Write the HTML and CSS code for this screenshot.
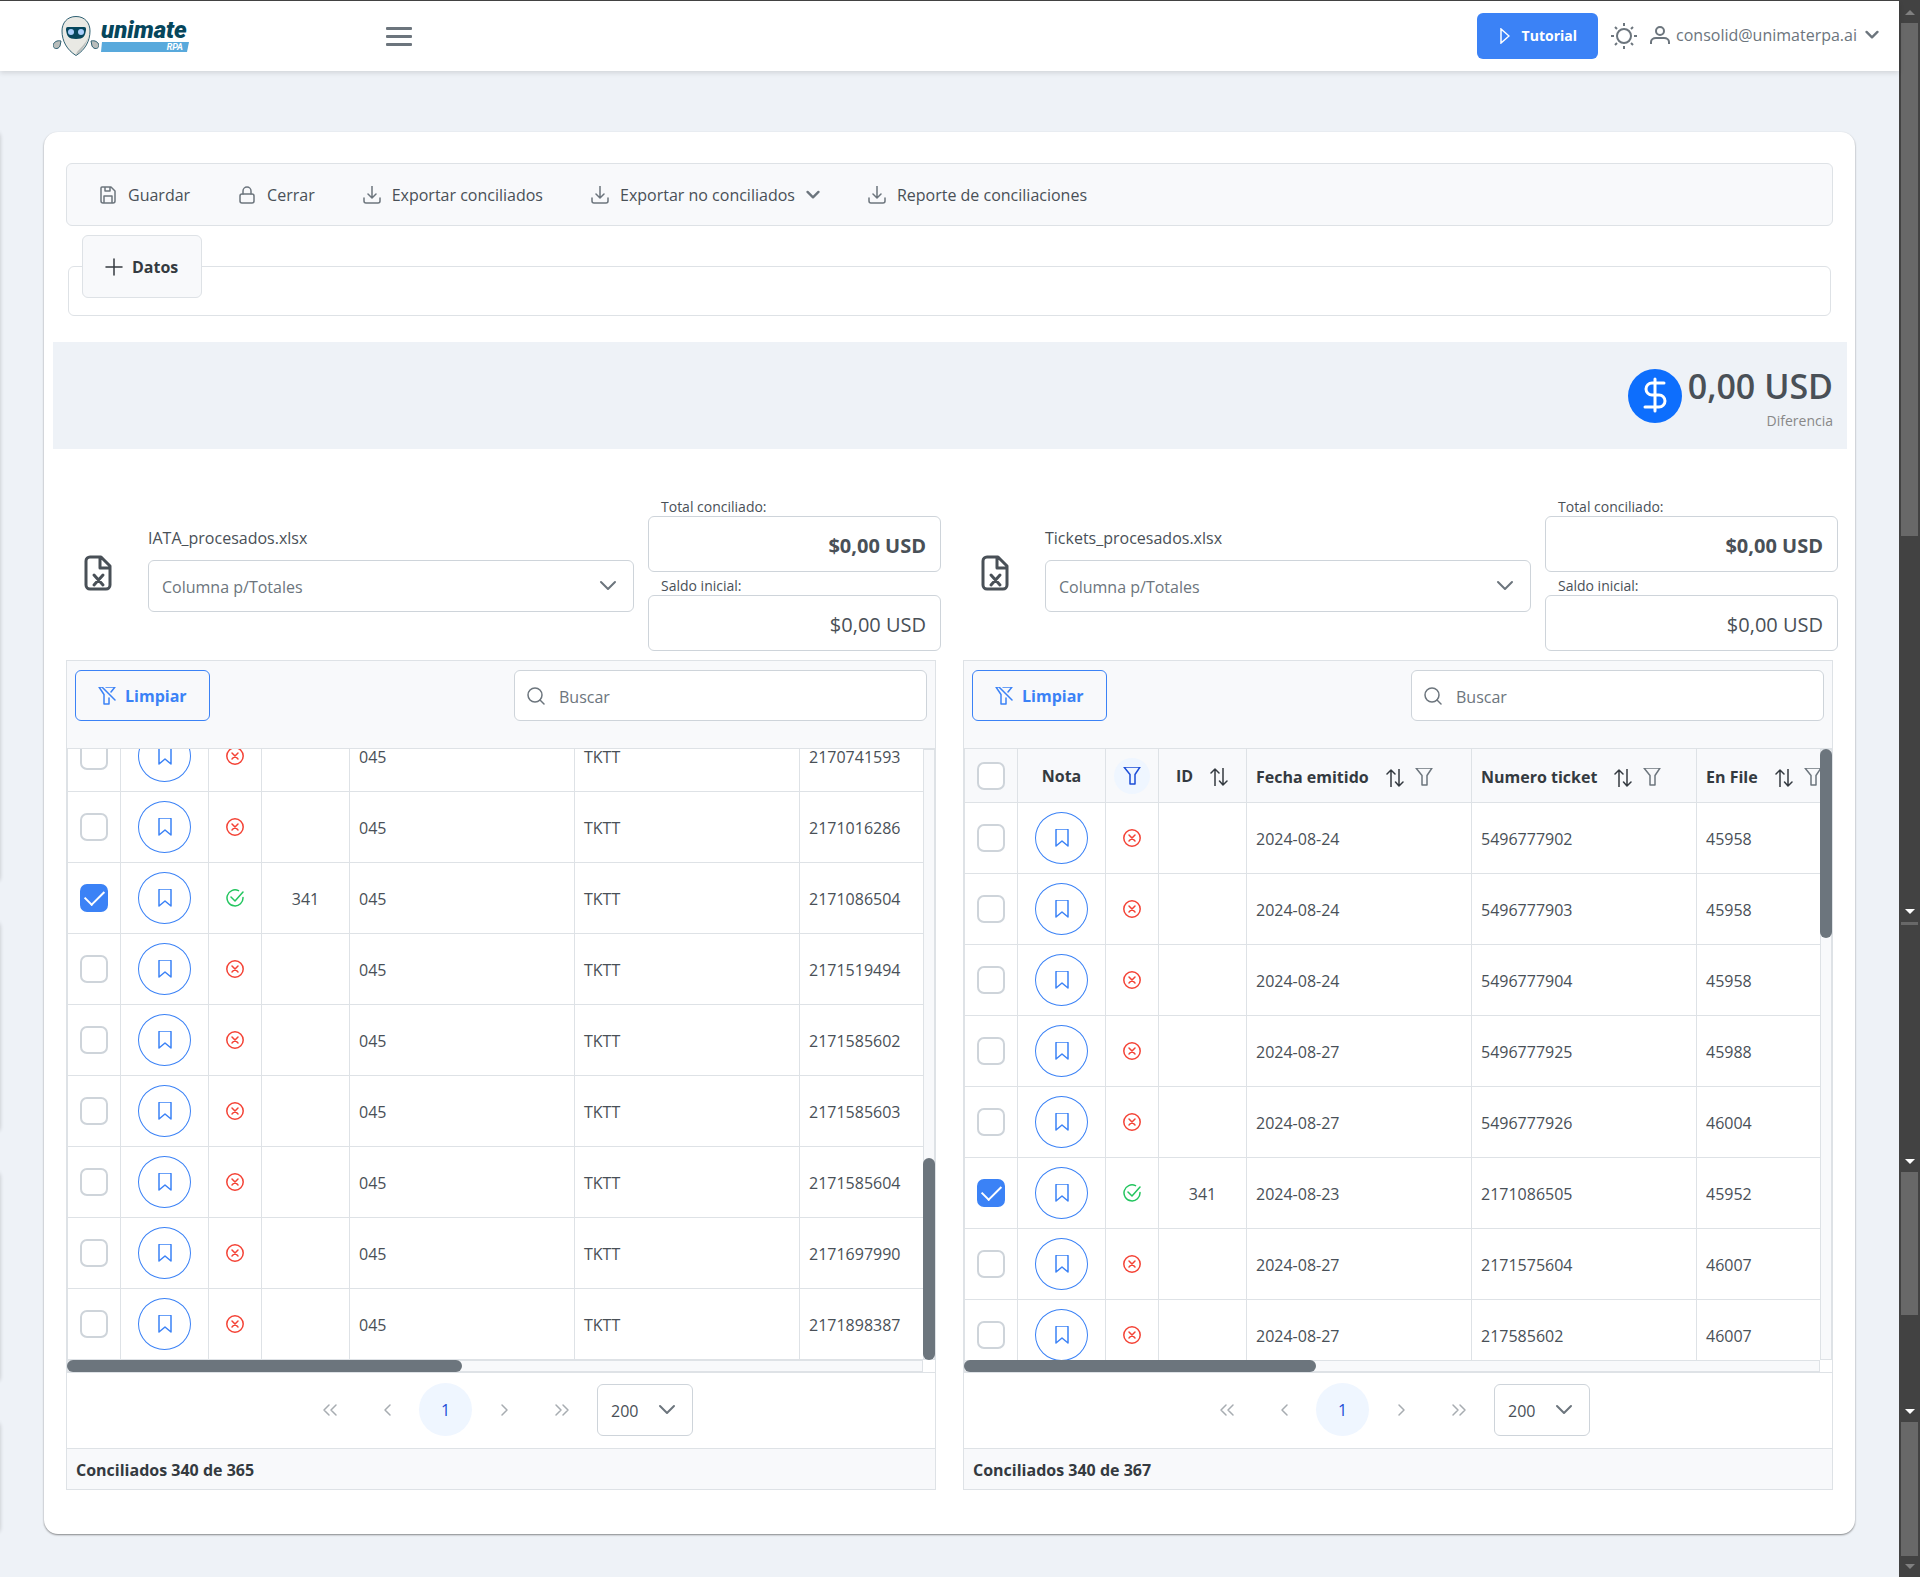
FILE: index.html
```html
<!DOCTYPE html>
<html lang="es">
<head>
<meta charset="utf-8">
<meta name="viewport" content="width=device-width, initial-scale=1">
<title>Unimate RPA - Conciliaciones</title>
<link rel="stylesheet" href="styles.css">
</head>
<body>

<svg class="sprite" aria-hidden="true">
	<symbol id="save" viewBox="0 0 18 18"><path d="M3 1h9l4 4v10a2 2 0 0 1-2 2H4a2 2 0 0 1-2-2V2a1 1 0 0 1 1-1zM5 17v-7h8v7M6 1v4h5V1"/></symbol>
	<symbol id="lock" viewBox="0 0 18 18"><rect x="2" y="8" width="14" height="9" rx="2"/><path d="M5 8V5a4 4 0 0 1 8 0v3"/></symbol>
	<symbol id="download" viewBox="0 0 18 18"><path d="M9 0v11M5 8l4 4 4-4M1 12v3a2 2 0 0 0 2 2h12a2 2 0 0 0 2-2v-3"/></symbol>
	<symbol id="plus" viewBox="0 0 18 18"><path d="M9 1v16M1 9h16"/></symbol>
	<symbol id="down" viewBox="0 0 18 18"><path d="M2 5l7 7 7-7"/></symbol>
	<symbol id="search" viewBox="0 0 18 18"><circle cx="8" cy="8" r="7"/><path d="M13 13l4 4"/></symbol>
	<symbol id="filter" viewBox="0 0 18 18"><path d="M1 0h16l-5 7.500V17H7V7.500z"/></symbol>
	<symbol id="filter-slash" viewBox="0 0 18 18"><path d="M1 0l5 7.500V17h5v-6M1 0h3l13 13M8 0h9l-4 5"/></symbol>
	<symbol id="sort" viewBox="0 0 18 18"><path d="M5 18V1M1 5l4-4 4 4M13 0v17M9.500 13l3.500 4 4-4"/></symbol>
	<symbol id="bookmark" viewBox="0 0 18 18"><path d="M4 0h10a1 1 0 0 1 1 1v16l-6-5-6 5V1a1 1 0 0 1 1-1z"/></symbol>
	<symbol id="no" viewBox="0 0 18 18"><circle cx="9" cy="9" r="8.200"/><path d="M6 6l6 6M12 6l-6 6"/></symbol>
	<symbol id="yes" viewBox="0 0 18 18"><path d="M17 8.500A8 8 0 1 1 12.500 1.700M5 8l4 4 8-9"/></symbol>
	<symbol id="first" viewBox="0 0 18 18"><path d="M8 4L3 9l5 5M15 4l-5 5 5 5"/></symbol>
	<symbol id="prev" viewBox="0 0 18 18"><path d="M11 4L6 9l5 5"/></symbol>
	<symbol id="next" viewBox="0 0 18 18"><path d="M7 4l5 5-5 5"/></symbol>
	<symbol id="last" viewBox="0 0 18 18"><path d="M3 4l5 5-5 5M10 4l5 5-5 5"/></symbol>
	<symbol id="excel" viewBox="0 0 28 36"><path d="M6 2h11l9 9v19a4 4 0 0 1-4 4H6a4 4 0 0 1-4-4V6a4 4 0 0 1 4-4zM16 2v11h10M10 20l9 10M19 20l-9 10"/></symbol>
</svg>

<div class="page">
	<header class="topbar">
		<a class="logo" href="#">
			<svg class="robot" viewBox="0 0 46 40" aria-hidden="true">
				<path d="M8 25c-4-1-7 1-8 4 0 4 5 5 7 1z" fill="#b9bdbb" stroke="#2f6072"/>
				<path d="M38 25c4-1 7 1 8 4 0 4-5 5-7 1z" fill="#b9bdbb" stroke="#2f6072"/>
				<path d="M23 .500C14 .500 9 7 9 15c0 10 5 19 14 24.500C32 34 37 25 37 15 37 7 32 .500 23 .500z" fill="#e9e9e4" stroke="#2f6072"/>
				<path d="M36 19c-2 8-6 15-13 20 0-5 10-9 13-20z" fill="#b9bdbb"/>
				<path d="M15 11h16c2 0 2 1 2 3-1 6-2 9-10 9s-9-3-10-9c0-2 0-3 2-3z" fill="#06465c"/>
				<circle cx="18" cy="16" r="3" fill="#a9cdfa"/><circle cx="28" cy="16" r="3" fill="#a9cdfa"/>
			</svg>
			<span class="brand">
				<span class="brand-name">unimate</span>
				<span class="brand-tag">RPA</span>
			</span>
		</a>
		<button class="menu" aria-label="Menú"><span></span><span></span><span></span></button>
		<div class="account">
			<button class="tutorial"><svg class="play" viewBox="0 0 10 16" aria-hidden="true"><path d="M1 1v14l8-7z"/></svg>Tutorial</button>
			<button class="plain" aria-label="Tema"><svg class="sun" viewBox="0 0 26 26" aria-hidden="true"><circle cx="13" cy="13" r="7"/><path d="M13 0v3M13 23v3M0 13h3M23 13h3M4 4l2 2M20 20l2 2M22 4l-2 2M6 20l-2 2"/></svg></button>
			<button class="plain user"><svg class="person" viewBox="0 0 20 18" aria-hidden="true"><circle cx="10" cy="5" r="4"/><path d="M1 18v-2c0-2 2-4 5-4h8c3 0 5 2 5 4v2"/></svg>consolid@unimaterpa.ai<svg class="icon tiny bold" aria-hidden="true"><use href="#down"/></svg></button>
		</div>
	</header>

	<div class="edge"><span></span><span></span><span></span><span></span></div>

	<main class="card">
		<nav class="toolbar">
			<button><svg class="icon"><use href="#save"/></svg>Guardar</button>
			<button><svg class="icon"><use href="#lock"/></svg>Cerrar</button>
			<button><svg class="icon"><use href="#download"/></svg>Exportar conciliados</button>
			<button><svg class="icon"><use href="#download"/></svg>Exportar no conciliados<svg class="icon tiny bold"><use href="#down"/></svg></button>
			<button><svg class="icon"><use href="#download"/></svg>Reporte de conciliaciones</button>
		</nav>

		<fieldset class="datos">
			<legend><button><svg class="icon"><use href="#plus"/></svg>Datos</button></legend>
		</fieldset>

		<section class="diferencia">
			<svg class="dollar" viewBox="0 0 54 54" aria-hidden="true"><circle cx="27" cy="27" r="27"/><path d="M27 10v32M36 14H24a6 6 0 0 0 0 12h7a6 6 0 0 1 0 12H17"/></svg>
			<div>
				<strong>0,00 USD</strong>
				<small>Diferencia</small>
			</div>
		</section>

		<div class="sides">
			<section class="side">
				<div class="fields">
					<svg class="excel" aria-hidden="true"><use href="#excel"/></svg>
					<div class="source">
						<label for="col1">IATA_procesados.xlsx</label>
						<div class="dropdown">
							<select id="col1"><option>Columna p/Totales</option></select>
							<svg class="icon"><use href="#down"/></svg>
						</div>
					</div>
					<div class="totals">
						<label for="total1">Total conciliado:</label>
						<input id="total1" class="strong" type="text" value="$0,00 USD">
						<label for="saldo1">Saldo inicial:</label>
						<input id="saldo1" type="text" value="$0,00 USD">
					</div>
				</div>

				<div class="panel">
					<div class="panel-head">
						<button class="clear"><svg class="icon"><use href="#filter-slash"/></svg>Limpiar</button>
						<div class="search"><svg class="icon"><use href="#search"/></svg><input type="search" placeholder="Buscar" aria-label="Buscar"></div>
					</div>
					<div class="scroller">
						<div class="view at-end">
							<table>
								<colgroup><col class="c-check"><col class="c-note"><col class="c-state"><col class="c-id"><col class="c-data"><col class="c-data"><col class="c-data"></colgroup>
								<tbody>
								<tr><td><input type="checkbox" aria-label="Fila"></td><td><button class="note" aria-label="Nota"><svg class="icon"><use href="#bookmark"/></svg></button></td><td><svg class="icon no"><use href="#no"/></svg></td><td></td><td>045</td><td>TKTT</td><td>2170741593</td></tr>
								<tr><td><input type="checkbox" aria-label="Fila"></td><td><button class="note" aria-label="Nota"><svg class="icon"><use href="#bookmark"/></svg></button></td><td><svg class="icon no"><use href="#no"/></svg></td><td></td><td>045</td><td>TKTT</td><td>2171016286</td></tr>
								<tr><td><input type="checkbox" aria-label="Fila" checked></td><td><button class="note" aria-label="Nota"><svg class="icon"><use href="#bookmark"/></svg></button></td><td><svg class="icon yes"><use href="#yes"/></svg></td><td>341</td><td>045</td><td>TKTT</td><td>2171086504</td></tr>
								<tr><td><input type="checkbox" aria-label="Fila"></td><td><button class="note" aria-label="Nota"><svg class="icon"><use href="#bookmark"/></svg></button></td><td><svg class="icon no"><use href="#no"/></svg></td><td></td><td>045</td><td>TKTT</td><td>2171519494</td></tr>
								<tr><td><input type="checkbox" aria-label="Fila"></td><td><button class="note" aria-label="Nota"><svg class="icon"><use href="#bookmark"/></svg></button></td><td><svg class="icon no"><use href="#no"/></svg></td><td></td><td>045</td><td>TKTT</td><td>2171585602</td></tr>
								<tr><td><input type="checkbox" aria-label="Fila"></td><td><button class="note" aria-label="Nota"><svg class="icon"><use href="#bookmark"/></svg></button></td><td><svg class="icon no"><use href="#no"/></svg></td><td></td><td>045</td><td>TKTT</td><td>2171585603</td></tr>
								<tr><td><input type="checkbox" aria-label="Fila"></td><td><button class="note" aria-label="Nota"><svg class="icon"><use href="#bookmark"/></svg></button></td><td><svg class="icon no"><use href="#no"/></svg></td><td></td><td>045</td><td>TKTT</td><td>2171585604</td></tr>
								<tr><td><input type="checkbox" aria-label="Fila"></td><td><button class="note" aria-label="Nota"><svg class="icon"><use href="#bookmark"/></svg></button></td><td><svg class="icon no"><use href="#no"/></svg></td><td></td><td>045</td><td>TKTT</td><td>2171697990</td></tr>
								<tr><td><input type="checkbox" aria-label="Fila"></td><td><button class="note" aria-label="Nota"><svg class="icon"><use href="#bookmark"/></svg></button></td><td><svg class="icon no"><use href="#no"/></svg></td><td></td><td>045</td><td>TKTT</td><td>2171898387</td></tr>
								</tbody>
							</table>
						</div>
						<div class="bar-v at-end"><span class="thumb-long"></span></div>
						<div class="bar-h"><span class="thumb-wide"></span></div>
					</div>
					<div class="paginator">
						<button aria-label="Primera"><svg class="icon"><use href="#first"/></svg></button>
						<button aria-label="Anterior"><svg class="icon"><use href="#prev"/></svg></button>
						<button class="current">1</button>
						<button aria-label="Siguiente"><svg class="icon"><use href="#next"/></svg></button>
						<button aria-label="Última"><svg class="icon"><use href="#last"/></svg></button>
						<div class="dropdown rows">
							<select aria-label="Filas por página"><option>200</option></select>
							<svg class="icon"><use href="#down"/></svg>
						</div>
					</div>
					<div class="panel-foot">Conciliados 340 de 365</div>
				</div>
			</section>

			<section class="side">
				<div class="fields">
					<svg class="excel" aria-hidden="true"><use href="#excel"/></svg>
					<div class="source">
						<label for="col2">Tickets_procesados.xlsx</label>
						<div class="dropdown">
							<select id="col2"><option>Columna p/Totales</option></select>
							<svg class="icon"><use href="#down"/></svg>
						</div>
					</div>
					<div class="totals">
						<label for="total2">Total conciliado:</label>
						<input id="total2" class="strong" type="text" value="$0,00 USD">
						<label for="saldo2">Saldo inicial:</label>
						<input id="saldo2" type="text" value="$0,00 USD">
					</div>
				</div>

				<div class="panel">
					<div class="panel-head">
						<button class="clear"><svg class="icon"><use href="#filter-slash"/></svg>Limpiar</button>
						<div class="search"><svg class="icon"><use href="#search"/></svg><input type="search" placeholder="Buscar" aria-label="Buscar"></div>
					</div>
					<div class="scroller">
						<div class="view">
							<table>
								<colgroup><col class="c-check"><col class="c-note"><col class="c-state"><col class="c-id"><col class="c-data"><col class="c-data"><col class="c-data"></colgroup>
								<thead>
								<tr>
									<th><input type="checkbox" aria-label="Todas"></th>
									<th>Nota</th>
									<th><button class="filter-on" aria-label="Filtrar"><svg class="icon"><use href="#filter"/></svg></button></th>
									<th><div class="th">ID<svg class="icon sort"><use href="#sort"/></svg></div></th>
									<th><div class="th">Fecha emitido<svg class="icon sort"><use href="#sort"/></svg><svg class="icon filter"><use href="#filter"/></svg></div></th>
									<th><div class="th">Numero ticket<svg class="icon sort"><use href="#sort"/></svg><svg class="icon filter"><use href="#filter"/></svg></div></th>
									<th><div class="th">En File<svg class="icon sort"><use href="#sort"/></svg><svg class="icon filter"><use href="#filter"/></svg></div></th>
								</tr>
								</thead>
								<tbody>
								<tr><td><input type="checkbox" aria-label="Fila"></td><td><button class="note" aria-label="Nota"><svg class="icon"><use href="#bookmark"/></svg></button></td><td><svg class="icon no"><use href="#no"/></svg></td><td></td><td>2024-08-24</td><td>5496777902</td><td>45958</td></tr>
								<tr><td><input type="checkbox" aria-label="Fila"></td><td><button class="note" aria-label="Nota"><svg class="icon"><use href="#bookmark"/></svg></button></td><td><svg class="icon no"><use href="#no"/></svg></td><td></td><td>2024-08-24</td><td>5496777903</td><td>45958</td></tr>
								<tr><td><input type="checkbox" aria-label="Fila"></td><td><button class="note" aria-label="Nota"><svg class="icon"><use href="#bookmark"/></svg></button></td><td><svg class="icon no"><use href="#no"/></svg></td><td></td><td>2024-08-24</td><td>5496777904</td><td>45958</td></tr>
								<tr><td><input type="checkbox" aria-label="Fila"></td><td><button class="note" aria-label="Nota"><svg class="icon"><use href="#bookmark"/></svg></button></td><td><svg class="icon no"><use href="#no"/></svg></td><td></td><td>2024-08-27</td><td>5496777925</td><td>45988</td></tr>
								<tr><td><input type="checkbox" aria-label="Fila"></td><td><button class="note" aria-label="Nota"><svg class="icon"><use href="#bookmark"/></svg></button></td><td><svg class="icon no"><use href="#no"/></svg></td><td></td><td>2024-08-27</td><td>5496777926</td><td>46004</td></tr>
								<tr><td><input type="checkbox" aria-label="Fila" checked></td><td><button class="note" aria-label="Nota"><svg class="icon"><use href="#bookmark"/></svg></button></td><td><svg class="icon yes"><use href="#yes"/></svg></td><td>341</td><td>2024-08-23</td><td>2171086505</td><td>45952</td></tr>
								<tr><td><input type="checkbox" aria-label="Fila"></td><td><button class="note" aria-label="Nota"><svg class="icon"><use href="#bookmark"/></svg></button></td><td><svg class="icon no"><use href="#no"/></svg></td><td></td><td>2024-08-27</td><td>2171575604</td><td>46007</td></tr>
								<tr><td><input type="checkbox" aria-label="Fila"></td><td><button class="note" aria-label="Nota"><svg class="icon"><use href="#bookmark"/></svg></button></td><td><svg class="icon no"><use href="#no"/></svg></td><td></td><td>2024-08-27</td><td>217585602</td><td>46007</td></tr>
								</tbody>
							</table>
						</div>
						<div class="bar-v"><span></span></div>
						<div class="bar-h"><span></span></div>
					</div>
					<div class="paginator">
						<button aria-label="Primera"><svg class="icon"><use href="#first"/></svg></button>
						<button aria-label="Anterior"><svg class="icon"><use href="#prev"/></svg></button>
						<button class="current">1</button>
						<button aria-label="Siguiente"><svg class="icon"><use href="#next"/></svg></button>
						<button aria-label="Última"><svg class="icon"><use href="#last"/></svg></button>
						<div class="dropdown rows">
							<select aria-label="Filas por página"><option>200</option></select>
							<svg class="icon"><use href="#down"/></svg>
						</div>
					</div>
					<div class="panel-foot">Conciliados 340 de 367</div>
				</div>
			</section>
		</div>
	</main>
</div>

<div class="rail" aria-hidden="true">
	<i class="arrow up"></i>
	<b class="grip g1"></b>
	<i class="arrow lit"></i>
	<b class="grip g2"></b>
	<i class="arrow lit"></i>
	<b class="grip g3"></b>
	<i class="arrow lit"></i>
	<b class="grip g4"></b>
	<i class="arrow"></i>
</div>

</body>
</html>
```
FILE: styles.css
```css
* {
	box-sizing: border-box;
}

body {
	margin: 0;
	min-height: 100vh;
	display: flex;
	border-top: 1px solid #424242;
	background: #eef2f7;
	color: #495057;
	font-family: "Open Sans", "Noto Sans", sans-serif;
	font-size: 16px;
	line-height: 24px;
}

button, input, select {
	font: inherit;
	color: inherit;
}

button {
	display: inline-flex;
	align-items: center;
	padding: 0;
	border: 0;
	background: none;
	white-space: nowrap;
}

svg {
	display: block;
	flex: none;
	fill: none;
	stroke: currentColor;
}

.sprite {
	position: absolute;
	width: 0;
	height: 0;
}

.icon {
	width: 18px;
	height: 18px;
	stroke-width: 1.5px;
	stroke-linecap: round;
	stroke-linejoin: round;
	overflow: visible;
}

.icon.tiny {
	width: 14px;
	height: 14px;
}

.icon.bold {
	stroke-width: 3px;
}

.page {
	flex: 1;
	min-width: 0;
	position: relative;
}

/* top bar */

.topbar {
	display: flex;
	align-items: center;
	height: 70px;
	padding: 0 20px 0 53px;
	background: #fff;
	box-shadow: 0 2px 5px rgba(0, 0, 0, .12);
}

.logo {
	display: flex;
	gap: 2px;
	width: 333px;
	text-decoration: none;
}

.robot {
	width: 46px;
	height: 40px;
	stroke: none;
}

.brand {
	width: 88px;
	padding-top: 2px;
	font-family: Roboto, sans-serif;
	font-style: italic;
	font-weight: 700;
}

.brand-name {
	display: block;
	color: #06465c;
	font-size: 24px;
	font-weight: 900;
	line-height: 24px;
}

.brand-tag {
	display: block;
	padding-right: 6px;
	background: #58a9dc;
	color: #fff;
	font-size: 9px;
	line-height: 10px;
	text-align: right;
	clip-path: polygon(1px 0, 100% 0, 86px 100%, 0 100%);
}

.menu {
	flex-direction: column;
	gap: 5px;
}

.menu span {
	width: 26px;
	height: 3px;
	border-radius: 1px;
	background: #6c757d;
}

.account {
	display: flex;
	align-items: center;
	gap: 13px;
	margin-left: auto;
	color: #6c757d;
}

.tutorial {
	gap: 12px;
	height: 46px;
	padding: 0 21px 0 23px;
	border-radius: 6px;
	background: #3b82f6;
	color: #fff;
	font-size: 14px;
	font-weight: 700;
}

.play {
	width: 10px;
	height: 16px;
	stroke-width: 1.5px;
}

.sun {
	width: 26px;
	height: 26px;
	stroke-width: 2px;
}

.person {
	width: 20px;
	height: 18px;
	stroke-width: 2px;
}

.user {
	gap: 6px;
	padding-bottom: 2px;
}

.user .tiny {
	margin-left: 2px;
}

/* panels parked off the left side, only the shadow is seen */

.edge {
	position: absolute;
	top: 131px;
	bottom: 44px;
	right: 100%;
	width: 10px;
	display: flex;
	flex-direction: column;
	gap: 40px;
}

.edge span {
	height: 210px;
	border-radius: 12px;
	box-shadow: 0 0 4px rgba(0, 0, 0, .2);
}

.edge span:first-child {
	height: 750px;
}

.edge span:last-child {
	flex: 1;
}

.card {
	margin: 61px 44px 43px;
	padding: 31px 8px 44px 9px;
	border-radius: 14px;
	background: #fff;
	box-shadow: 0 1px 2px rgba(0, 0, 0, .45);
}

.toolbar {
	display: flex;
	align-items: center;
	gap: 48px;
	height: 63px;
	margin: 0 14px 9px 13px;
	padding: 0 32px;
	border: 1px solid #dee2e6;
	border-radius: 6px;
	background: #f8f9fb;
}

.toolbar button {
	gap: 11px;
}

.toolbar .icon {
	color: #6c757d;
}

.datos {
	height: 81px;
	margin: 0 16px 26px 15px;
	padding: 0 13px;
	border: 1px solid #dee2e6;
	border-radius: 6px;
}

.datos legend {
	padding: 0;
}

.datos button {
	gap: 9px;
	height: 63px;
	padding: 0 23px 0 22px;
	border: 1px solid #dee2e6;
	border-radius: 6px;
	background: #f8f9fb;
	color: #343a40;
	font-weight: 700;
}

.diferencia {
	display: flex;
	justify-content: flex-end;
	align-items: center;
	gap: 6px;
	height: 107px;
	padding: 0 14px;
	background: #eef2f7;
	text-align: right;
}

.diferencia div {
	padding-top: 6px;
}

.dollar {
	width: 54px;
	height: 54px;
	stroke: #fff;
	stroke-width: 3px;
	stroke-linecap: round;
}

.dollar circle {
	fill: #0d6efd;
	stroke: none;
}

.diferencia strong {
	display: block;
	margin-bottom: 2px;
	font-size: 34px;
	font-weight: 600;
	line-height: 42px;
}

.diferencia small {
	display: block;
	color: #888;
	font-size: 14px;
}

/* both sides */

.sides {
	display: grid;
	grid-template-columns: 1fr 1fr;
	gap: 27px;
	margin: 48px 14px 0 13px;
}

.side {
	min-width: 0;
}

.fields {
	display: grid;
	grid-template-columns: 68px 1fr 293px;
	gap: 14px;
	margin: 0 -5px 9px 0;
}

.excel {
	width: 28px;
	height: 36px;
	margin: 58px 0 0 18px;
	stroke-width: 3px;
	stroke-linecap: round;
	stroke-linejoin: round;
}

.source {
	padding-top: 29px;
}

.source label {
	display: block;
	margin-bottom: 10px;
}

.dropdown {
	position: relative;
	color: #6c757d;
}

.dropdown select {
	appearance: none;
	width: 100%;
	height: 52px;
	padding: 2px 13px 0;
	border: 1px solid #ced4da;
	border-radius: 6px;
	background: #fff;
}

.dropdown .icon {
	position: absolute;
	top: 17px;
	right: 17px;
	stroke-width: 2px;
	pointer-events: none;
}

.totals label {
	display: block;
	padding-left: 13px;
	font-size: 14px;
	line-height: 19px;
}

.totals input {
	display: block;
	width: 100%;
	height: 56px;
	padding: 2px 14px 0;
	border: 1px solid #ced4da;
	border-radius: 6px;
	background: #fff;
	font-size: 20px;
	text-align: right;
}

.totals .strong {
	margin-bottom: 4px;
	font-weight: 700;
}

.panel {
	border: 1px solid #dee2e6;
}

.panel-head {
	display: flex;
	justify-content: space-between;
	padding: 9px 8px 27px;
	border-bottom: 1px solid #dee2e6;
	background: #f8f9fb;
}

.clear {
	gap: 9px;
	height: 51px;
	padding: 0 22px;
	border: 1px solid #3b82f6;
	border-radius: 6px;
	color: #3b82f6;
	font-weight: 700;
}

.search {
	display: flex;
	align-items: center;
	width: 413px;
	height: 51px;
	padding: 0 12px;
	gap: 14px;
	border: 1px solid #ced4da;
	border-radius: 6px;
	background: #fff;
	color: #6c757d;
}

.search input {
	flex: 1;
	min-width: 0;
	padding: 2px 0 0;
	border: 0;
	outline: 0;
	background: none;
}

.search input::placeholder {
	color: #6c757d;
}

.scroller {
	display: grid;
	grid-template-columns: 1fr 12px;
	grid-template-rows: 611px 12px;
}

.view {
	display: flex;
	align-items: flex-start;
	min-width: 0;
	overflow: hidden;
}

.view.at-end {
	align-items: flex-end;
}

table {
	flex: none;
	width: 957px;
	table-layout: fixed;
	border-collapse: separate;
	border-spacing: 0;
}

.c-check, .c-state {
	width: 53px;
}

.c-note, .c-id {
	width: 88px;
}

.c-data {
	width: 225px;
}

td, th {
	height: 71px;
	padding: 2px 9px 0;
	border: solid #dee2e6;
	border-width: 0 0 1px 1px;
	line-height: 20px;
	text-align: left;
}

td:nth-child(-n+3), th:nth-child(-n+4) {
	padding: 0;
	text-align: center;
}

td:nth-child(4) {
	text-align: center;
}

th {
	height: 54px;
	background: #f8f9fb;
	color: #343a40;
	font-weight: 700;
}

td .icon, th .icon {
	margin: 0 auto;
}

.th {
	display: flex;
	align-items: center;
	white-space: nowrap;
}

.th .sort {
	margin: 2px 0 0 17px;
}

.th .filter {
	margin: 0 0 0 11px;
	color: #6c757d;
}

th:nth-child(4) .th {
	padding-left: 17px;
}

.filter-on {
	width: 36px;
	height: 36px;
	border-radius: 50%;
	background: #eff6ff;
	color: #1d4ed8;
	vertical-align: middle;
}

input[type="checkbox"] {
	appearance: none;
	display: grid;
	place-items: center;
	width: 28px;
	height: 28px;
	margin: 0 auto;
	border: 2px solid #ced4da;
	border-radius: 7px;
	background: #fff;
}

input[type="checkbox"]:checked {
	border-color: #3b82f6;
	background: #3b82f6;
}

input[type="checkbox"]:checked::after {
	content: "";
	width: 9px;
	height: 17px;
	margin-bottom: 6px;
	border: solid #fff;
	border-width: 0 2px 2px 0;
	transform: rotate(45deg);
}

.note {
	width: 53px;
	height: 52px;
	border: 1px solid #3b82f6;
	border-radius: 50%;
	color: #3b82f6;
	vertical-align: middle;
}

.no {
	color: #f44336;
}

.yes {
	color: #22c55e;
}

.bar-v, .bar-h {
	display: flex;
	border: 1px solid #dee2e6;
	background: #f8f9fb;
}

.bar-v.at-end {
	align-items: flex-end;
}

.bar-v span, .bar-h span {
	margin: -1px;
	border-radius: 6px;
	background: #6c757d;
}

.bar-v span {
	width: 12px;
	height: 189px;
}

.bar-h span {
	width: calc(41% + 2px);
	height: 12px;
}

.bar-v .thumb-long {
	height: 202px;
}

.bar-h .thumb-wide {
	width: calc(46% + 2px);
}

.paginator {
	display: flex;
	justify-content: center;
	align-items: center;
	gap: 5px;
	height: 76px;
	padding: 0 6px 2px 0;
	border-top: 1px solid #dee2e6;
}

.paginator button {
	justify-content: center;
	width: 53px;
	height: 53px;
	border-radius: 50%;
	color: #a7acb1;
}

.paginator .current {
	background: #eff6ff;
	color: #1d4ed8;
}

.rows {
	width: 96px;
	margin-left: 4px;
}

.rows select {
	color: #495057;
}

.panel-foot {
	height: 41px;
	padding: 9px 8px 7px 9px;
	border-top: 1px solid #dee2e6;
	background: #f8f9fb;
	color: #343a40;
	font-weight: 700;
}

/* window scroll rail */

.rail {
	display: flex;
	flex-direction: column;
	align-items: center;
	width: 21px;
	background: #424242;
}

.arrow {
	width: 0;
	height: 0;
	margin: 8px 0;
	border: solid transparent;
	border-width: 5px 5px 0;
	border-top-color: #808080;
}

.arrow.up {
	margin-top: 9px;
	border-width: 0 5px 5px;
	border-bottom-color: #808080;
}

.arrow.lit {
	border-top-color: #fff;
}

.grip {
	width: 17px;
	background: #686868;
}

.g1 {
	height: 513px;
	margin-bottom: 365px;
}

.g2 {
	height: 3px;
	margin-bottom: 226px;
}

.g3 {
	height: 143px;
	margin-bottom: 86px;
}

.g4 {
	flex: 1;
}
```
